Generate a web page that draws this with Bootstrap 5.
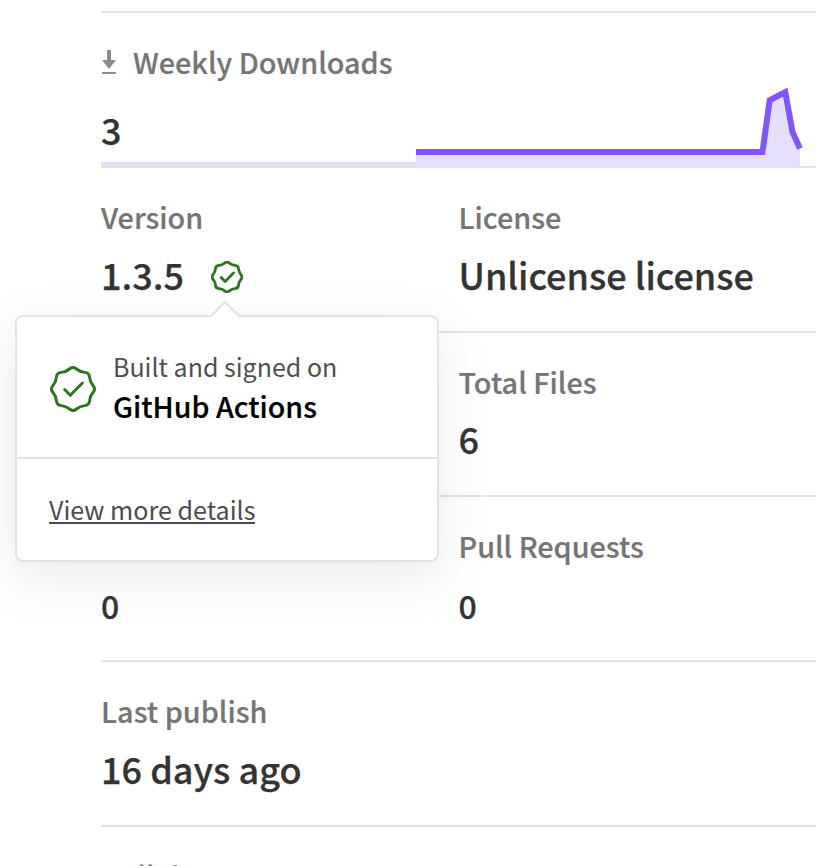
<!DOCTYPE html>
<html lang="en">
<head>
<meta charset="utf-8">
<meta name="viewport" content="width=device-width, initial-scale=1">
<title>Package details</title>
<link href="https://cdn.jsdelivr.net/npm/bootstrap@5.3.0/dist/css/bootstrap.min.css" rel="stylesheet">
<style>
  body { font-family: "Noto Sans CJK SC", "Noto Sans", sans-serif; height: 866px; background: #fff; }
  .sidebar { width: 715px; margin-left: 101px; padding-top: 11px; }
  .line { border-bottom: 2px solid #e3e3e3; }
  .line-top { border-top: 2px solid #e3e3e3; }
  .meta { height: 165px; padding-top: 29px; }
  .meta-short { height: 164px; }
  .meta-last { height: 39px; }
  .downloads { height: 157px; }
  .downloads-info { width: 315px; padding-top: 29px; border-bottom: 4px solid #e5defc; }
  .label { font-size: 28.8px; font-weight: 500; line-height: 40px; height: 40px; color: #757575; -webkit-text-stroke: .2px #757575; }
  .value { font-size: 36px; font-weight: 500; line-height: 40px; height: 40px; margin-top: 17px; color: #333; -webkit-text-stroke: .25px #333; }
  .meta-short .value { margin-top: 16px; }
  .downloads-info .value { margin-top: 27px; }
  .value-sm { font-size: 32px; margin-top: 19px; }
  .label-icon { margin-right: 16px; }
  .green { stroke: #2e7520; fill: none; stroke-linecap: round; stroke-linejoin: round; }
  .badge-link { margin: 6px 0 0 27px; width: 32px; height: 32px; }
  .signed { left: -86px; top: 147px; width: 424px; height: 247px; border: 2px solid #e3e4e5; border-radius: 8px; box-shadow: 0 16px 48px rgba(140,149,159,.2); z-index: 5; }
  .signed-arrow { left: 193px; top: -17px; }
  .signed-head { height: 142px; padding: 0 0 2px 33px; gap: 17px; }
  .signed-head .seal-lg { width: 46px; height: 46px; margin-top: 6px; }
  .signed-head .built { font-size: 25px; line-height: 40px; color: #4f4f4f; }
  .signed-head .builder { font-size: 28.6px; line-height: 40px; font-weight: 500; color: #000; -webkit-text-stroke: .2px #000; }
  .signed-foot { padding: 30px 32px 0; line-height: 40px; font-size: 25.1px; }
  .more { color: #4d4d4d; border-bottom: 2px solid #4d4d4d; line-height: 28px; height: 29px; }
</style>
</head>
<body class="overflow-hidden">
<svg class="d-none" aria-hidden="true">
  <symbol id="seal" viewBox="-24 -24 48 48">
    <path d="M20.87 3.67Q17.74 7.35 17.35 12.16Q16.97 16.97 12.16 17.35Q7.35 17.74 3.67 20.87Q0 24 -3.67 20.87Q-7.35 17.74 -12.16 17.35Q-16.97 16.97 -17.35 12.16Q-17.74 7.35 -20.87 3.67Q-24 0 -20.87 -3.67Q-17.74 -7.35 -17.35 -12.16Q-16.97 -16.97 -12.16 -17.35Q-7.35 -17.74 -3.67 -20.87Q0 -24 3.67 -20.87Q7.35 -17.74 12.16 -17.35Q16.97 -16.97 17.35 -12.16Q17.74 -7.35 20.87 -3.67Q24 0 20.87 3.67Z"/>
    <path d="M-8.7 .6L-2.8 6.6L9.8 -6.2"/>
  </symbol>
</svg>
<main class="sidebar">
  <section class="downloads line line-top d-flex align-items-stretch">
    <div class="downloads-info flex-shrink-0">
      <div class="label d-flex align-items-center text-nowrap">
        <svg class="label-icon flex-shrink-0" width="16" height="26" viewBox="0 0 16 26" fill="#8c8c8c"><path d="M6 1h4v10h5l-7 9-7-9h5zM1 23h14v2H1z"/></svg>
        <span>Weekly Downloads</span>
      </div>
      <div class="value">3</div>
    </div>
    <svg class="align-self-end flex-shrink-0" width="390" height="86" viewBox="0 0 390 86" fill="none">
      <path fill="#e5defc" d="M0 72H346.5L353.7 20.3L369.3 12L376.5 52L384 68.5V86H0z"/>
      <path stroke="#8257fa" stroke-width="6" d="M0 72H346.5L353.7 20.3L369.3 12L376.5 52L384 68.5"/>
    </svg>
  </section>

  <section class="row g-0 meta line position-relative">
    <div class="col-6">
      <div class="label">Version</div>
      <div class="value d-flex align-items-center"><span>1.3.5</span><svg class="badge-link green" stroke-width="4.2"><use href="#seal"/></svg></div>
      <div class="signed position-absolute bg-white">
        <svg class="signed-arrow position-absolute" width="30" height="18" viewBox="0 0 30 18"><path fill="#fff" stroke="#e3e4e5" stroke-width="2" d="M1 16L15 2L29 16"/><path fill="#fff" d="M2 16h26v2H2z"/></svg>
        <div class="signed-head line d-flex align-items-center">
          <svg class="green seal-lg flex-shrink-0" stroke-width="3.1"><use href="#seal"/></svg>
          <div class="text-nowrap"><div class="built">Built and signed on</div><div class="builder">GitHub Actions</div></div>
        </div>
        <div class="signed-foot"><a class="more d-inline-block text-decoration-none text-nowrap" href="#">View more details</a></div>
      </div>
    </div>
    <div class="col-6">
      <div class="label">License</div>
      <div class="value text-nowrap">Unlicense license</div>
    </div>
  </section>

  <section class="row g-0 meta meta-short line">
    <div class="col-6 offset-6">
      <div class="label">Total Files</div>
      <div class="value">6</div>
    </div>
  </section>

  <section class="row g-0 meta line">
    <div class="col-6">
      <div class="label"></div>
      <div class="value value-sm">0</div>
    </div>
    <div class="col-6">
      <div class="label">Pull Requests</div>
      <div class="value value-sm">0</div>
    </div>
  </section>

  <section class="meta line">
    <div class="label">Last publish</div>
    <div class="value">16 days ago</div>
  </section>

  <section class="meta meta-last overflow-hidden">
    <div class="label">Collaborators</div>
  </section>
</main>
<script src="https://cdn.jsdelivr.net/npm/bootstrap@5.3.0/dist/js/bootstrap.bundle.min.js"></script>
</body>
</html>
